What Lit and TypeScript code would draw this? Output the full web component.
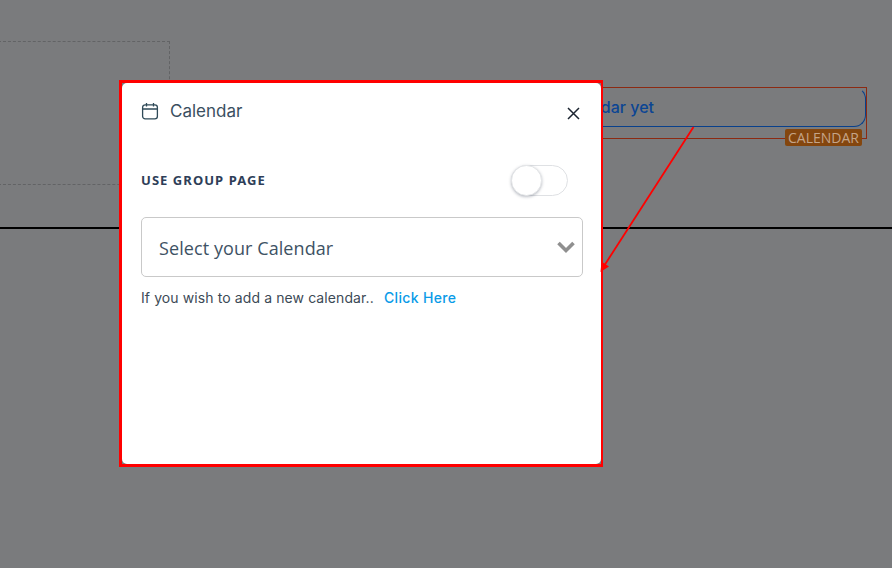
import { LitElement, html, css } from "lit";
import { customElement } from "lit/decorators.js";

@customElement("app-root")
export class AppRoot extends LitElement {
  static styles = css`
    :host { display: block; width: 892px; height: 568px; position: relative; overflow: hidden; background: #7a7b7d; font-family: Inter, "Liberation Sans", sans-serif; }
    .dashed { position: absolute; left: -2px; top: 41px; width: 170px; height: 142px; border: 1px dashed #626365; }
    .rule { position: absolute; left: 0; right: 0; top: 227px; height: 2px; background: #000; }
    .outer-target { position: absolute; left: 400px; top: 87px; width: 465px; height: 50px; border: 1px solid #8c2a12; }
    .field { position: absolute; left: 400px; top: 87px; width: 465px; height: 38px; box-sizing: content-box; border: 1px solid #08408c; border-top-color: transparent; border-left: 0; border-radius: 0 12px 12px 0; display: flex; align-items: center; justify-content: flex-end; color: #0b4594; font-size: 16px; font-weight: 500; }
    .field span { margin-right: 211px; white-space: nowrap; }
    .tag { position: absolute; left: 785px; top: 129px; width: 77px; height: 17px; background: #84460e; color: #c4a488; border-radius: 2px; font: 14px/18px "Open Sans", sans-serif; text-align: center; }
    .frame { position: absolute; left: 119px; top: 80px; width: 484px; height: 387px; box-sizing: border-box; border: 3px solid #ff0000; border-right-width: 2px; }
    .arrow { position: absolute; inset: 0; width: 892px; height: 568px; pointer-events: none; }
    .modal { height: 100%; box-sizing: border-box; background: #fff; border-radius: 5px; padding: 19px 18px 0 19px; display: flex; flex-direction: column; }
    .head { display: flex; align-items: center; gap: 10px; height: 18px; color: #3a4f5f; font-size: 17px; }
    .head svg { display: block; flex: none; }
    .head .title { flex: 1; line-height: 18px; margin-left: 1px; }
    .head .close { margin: 5px 3px 0 0; }
    .row { display: flex; justify-content: space-between; align-items: center; margin-top: 45px; height: 31px; padding-right: 15px; }
    .label { font: 700 13px/30px "Noto Sans", sans-serif; letter-spacing: 1.05px; color: #2e3e58; align-self: flex-start; }
    .toggle { width: 57px; height: 31px; box-sizing: border-box; border: 1px solid #dfe1e4; border-radius: 16px; position: relative; background: #fff; }
    .knob { position: absolute; left: -1px; top: -1px; width: 29px; height: 29px; background: #fff; border: 1px solid #e4e6e8; border-radius: 50%; box-shadow: 0 1px 3px rgba(60, 70, 90, .35); }
    .select { margin-top: 21px; height: 60px; box-sizing: border-box; border: 1px solid #c9c9c9; border-radius: 5px; display: flex; align-items: center; justify-content: space-between; padding: 2px 6px 0 17px; color: #3e5264; font: 18px "Open Sans", sans-serif; letter-spacing: 0.08px; }
    .select svg { margin-top: -3px; }
    .hint { margin-top: 12px; font-size: 14px; line-height: 17px; color: #3c4a56; letter-spacing: 0.1px; }
    .hint a { color: #0a9be8; font-weight: 500; margin-left: 6px; letter-spacing: 0.35px; }
  `;

  render() {
    return html`
      <div class="dashed"></div>
      <div class="rule"></div>
      <div class="outer-target"></div>
      <div class="field"><span>You have no calendar yet</span></div>
      <div class="tag">CALENDAR</div>
      <div class="frame">
        <div class="modal">
          <div class="head">
            <svg width="18" height="18" viewBox="0 0 18 18" fill="none" stroke="#2f4a58" stroke-width="1.3">
              <rect x="1.6" y="2.8" width="14.8" height="14" rx="2.6"></rect>
              <path d="M1.6 7h14.8M5.5 1v3.4M12.5 1v3.4"></path>
            </svg>
            <span class="title">Calendar</span>
            <svg class="close" width="13" height="13" viewBox="0 0 13 13" fill="none" stroke="#1b2430" stroke-width="1.5">
              <path d="M1 1l11 11M12 1L1 12"></path>
            </svg>
          </div>
          <div class="row">
            <span class="label">USE GROUP PAGE</span>
            <div class="toggle"><div class="knob"></div></div>
          </div>
          <div class="select">
            <span>Select your Calendar</span>
            <svg width="20" height="14" viewBox="0 0 20 14" fill="none" stroke="#8f8f8f" stroke-width="3.6">
              <path d="M2.5 3l7.5 7.5L17.5 3"></path>
            </svg>
          </div>
          <div class="hint">If you wish to add a new calendar.. <a>Click Here</a></div>
        </div>
      </div>
      <svg class="arrow" viewBox="0 0 892 568">
        <line x1="693.5" y1="127" x2="604" y2="266" stroke="#ff0000" stroke-width="1.8"></line>
        <polygon points="600.5,272 601.5,261.5 609,266.5" fill="#ff0000"></polygon>
      </svg>
    `;
  }
}
